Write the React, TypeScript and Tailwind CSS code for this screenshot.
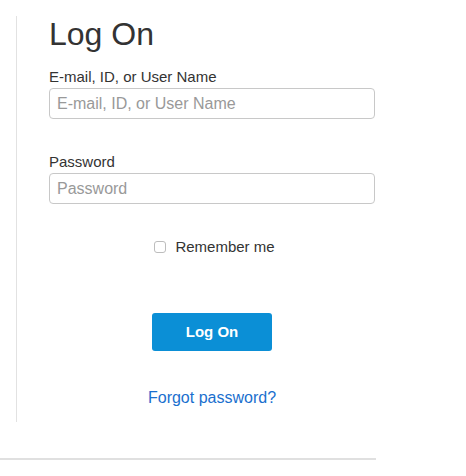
import React from "react";

export default function App() {
  return (
    <div className="w-[466px] h-[476px] bg-white pt-4 font-['Liberation_Sans',Arial,sans-serif] text-[#333]">
      <div className="ml-4 border-l border-[#e2e2e2] pl-8 pb-[14px]">
        <div className="w-[326px] flex flex-col">
          <h1 className="text-[32px] leading-[36px] font-normal text-[#333]">Log On</h1>
          <label className="mt-[15px] text-[15px] leading-[20px]">E-mail, ID, or User Name</label>
          <input
            type="text"
            placeholder="E-mail, ID, or User Name"
            className="mt-[1px] h-[31px] w-full rounded-[4px] border border-[#c8c8c8] px-[7px] text-[16px] text-[#333] placeholder:text-[#999] outline-none"
          />
          <label className="mt-[33px] text-[15px] leading-[20px]">Password</label>
          <input
            type="password"
            placeholder="Password"
            className="mt-[1px] h-[31px] w-full rounded-[4px] border border-[#c8c8c8] px-[7px] text-[16px] text-[#333] placeholder:text-[#999] outline-none"
          />
          <div className="mt-[33px] h-[20px] flex items-center justify-center pl-[5px]">
            <span className="w-[12px] h-[12px] rounded-[3px] border border-[#bdbdbd] bg-white" />
            <span className="ml-[9px] text-[15px] leading-[20px]">Remember me</span>
          </div>
          <button className="mt-[56px] mx-auto w-[120px] h-[38px] rounded-[3px] bg-[#0b8fd6] text-white font-bold text-[15px]">
            Log On
          </button>
          <a className="mt-[37px] self-center text-[16px] leading-[20px] text-[#1a6fce] cursor-pointer">
            Forgot password?
          </a>
        </div>
      </div>
      <div className="mt-[36px] w-[376px] h-[2px] bg-[#e0e0e0]" />
    </div>
  );
}
